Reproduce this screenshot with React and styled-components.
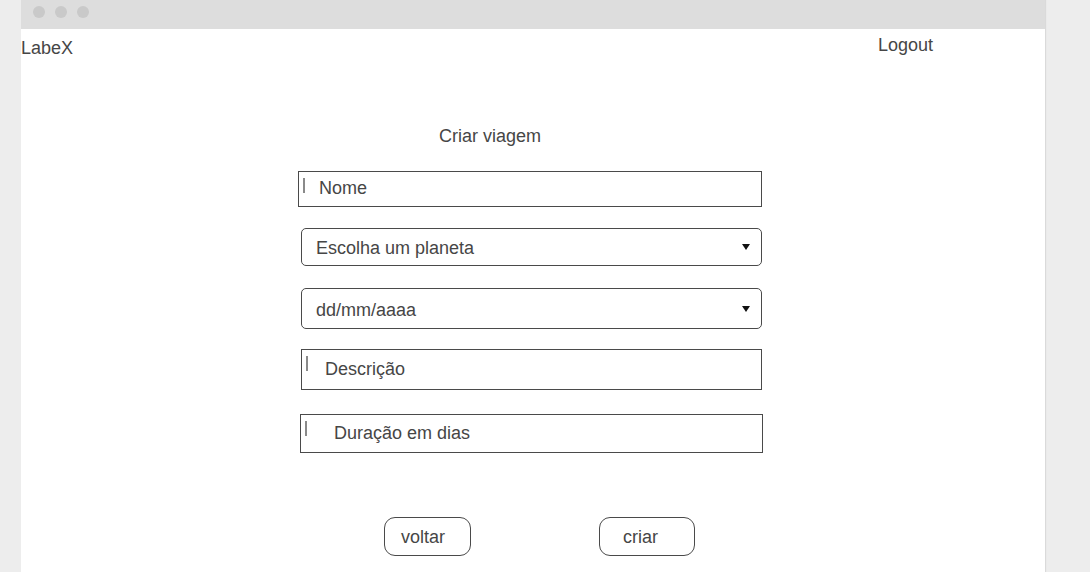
import React from 'react'
import styled, { createGlobalStyle } from 'styled-components'

const GlobalStyle = createGlobalStyle`
  html, body {
    margin: 0;
    padding: 0;
    background: #ededed;
    font-family: "Liberation Sans", Arial, sans-serif;
    color: #464646;
  }
`

const Page = styled.div`
  padding-left: 21px;
  height: 572px;
  overflow: hidden;
`

const Window = styled.div`
  width: 1024px;
  min-height: 572px;
  background: #fff;
  box-shadow: 1px 0 1px rgba(0, 0, 0, 0.08);
`

const TitleBar = styled.div`
  height: 29px;
  background: #dddddd;
  display: flex;
  align-items: flex-start;
  gap: 10px;
  padding: 6px 0 0 12px;
  box-sizing: border-box;
`

const Dot = styled.span`
  width: 12px;
  height: 12px;
  border-radius: 50%;
  background: #c9c9c9;
`

const Header = styled.div`
  display: flex;
  justify-content: space-between;
  align-items: flex-start;
  padding-right: 112px;
  font-size: 18px;
  line-height: 20px;
`

const Brand = styled.span`
  padding-top: 9px;
`

const Logout = styled.span`
  padding-top: 6px;
`

const Form = styled.div`
  display: flex;
  flex-direction: column;
  align-items: flex-start;
  padding-left: 277px;
  margin-top: 68px;
`

const Title = styled.div`
  font-size: 18px;
  line-height: 20px;
  margin-left: 141px;
  margin-bottom: 25px;
`

const Field = styled.div`
  position: relative;
  box-sizing: border-box;
  display: flex;
  align-items: center;
  width: ${p => p.$width}px;
  height: ${p => p.$height}px;
  margin-left: ${p => p.$offset || 0}px;
  margin-bottom: ${p => p.$gap || 0}px;
  padding-left: ${p => p.$indent}px;
  padding-top: ${p => Math.max(p.$nudge || 0, 0) * 2}px;
  padding-bottom: ${p => Math.max(-(p.$nudge || 0), 0) * 2}px;
  border: 1px solid #4a4a4a;
  border-radius: ${p => (p.$select ? 5 : 0)}px;
  font-size: 18px;
`

const Caret = styled.span`
  position: absolute;
  left: 4px;
  top: 6px;
  width: 2px;
  height: 15px;
  background: #8a8a8a;
`

const Arrow = styled.span`
  position: absolute;
  right: 11px;
  top: 50%;
  margin-top: -3px;
  width: 0;
  height: 0;
  border-left: 4px solid transparent;
  border-right: 4px solid transparent;
  border-top: 6px solid #111;
`

const Buttons = styled.div`
  display: flex;
  margin-top: 64px;
  padding-left: 86px;
`

const Button = styled.div`
  box-sizing: border-box;
  width: ${p => p.$width}px;
  height: 39px;
  margin-left: ${p => p.$offset || 0}px;
  padding: 2px 0 0 ${p => p.$indent}px;
  display: flex;
  align-items: center;
  border: 1px solid #4a4a4a;
  border-radius: 11px;
  font-size: 18px;
`

const App = () => {
  return (
    <Page>
      <GlobalStyle />
      <Window>
        <TitleBar>
          <Dot />
          <Dot />
          <Dot />
        </TitleBar>
        <Header>
          <Brand>LabeX</Brand>
          <Logout>Logout</Logout>
        </Header>
        <Form>
          <Title>Criar viagem</Title>
          <Field $width={464} $height={36} $indent={20} $gap={21} $nudge={-1}>
            <Caret />
            Nome
          </Field>
          <Field $width={461} $height={38} $offset={3} $indent={14} $gap={22} $nudge={1} $select>
            Escolha um planeta
            <Arrow />
          </Field>
          <Field $width={461} $height={41} $offset={3} $indent={14} $gap={20} $nudge={2} $select>
            dd/mm/aaaa
            <Arrow />
          </Field>
          <Field $width={461} $height={41} $offset={3} $indent={23} $gap={24}>
            <Caret />
            Descrição
          </Field>
          <Field $width={463} $height={39} $offset={2} $indent={33}>
            <Caret />
            Duração em dias
          </Field>
          <Buttons>
            <Button $width={87} $indent={16}>voltar</Button>
            <Button $width={96} $offset={128} $indent={23}>criar</Button>
          </Buttons>
        </Form>
      </Window>
    </Page>
  )
}

export default App
